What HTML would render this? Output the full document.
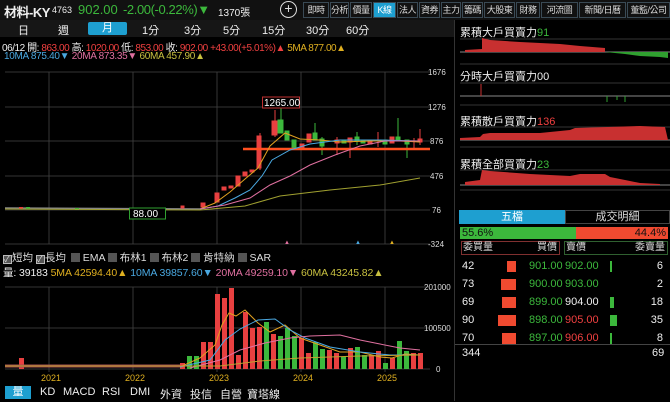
<!DOCTYPE html>
<html><head><meta charset="utf-8"><style>
*{margin:0;padding:0;box-sizing:border-box}
body{width:670px;height:401px;background:#000;color:#ddd;font-family:"Liberation Sans","Noto Sans CJK TC",sans-serif;font-size:11px;position:relative;overflow:hidden}
.a{position:absolute;white-space:nowrap}
.tab{position:absolute;top:2px;height:16px;border:1px solid #3a4a55;background:#111;color:#ddd;font-size:9px;text-align:center;line-height:14px;white-space:nowrap;overflow:hidden;letter-spacing:-0.5px}
.r{color:#f04040}.g{color:#3cb83c}.y{color:#e0b020}.b{color:#4aa8e0}.p{color:#e070a0}.o{color:#c8c040}.w{color:#eee}
</style></head><body>
<div class="a" style="left:0;top:0;width:670px;height:20px;background:#111"></div>
<div class="a" style="left:0;top:20px;width:455px;height:17px;background:#161616"></div>
<div class="a w" style="left:4px;top:2px;font-size:13px;font-weight:bold;letter-spacing:-0.5px">材料-KY</div>
<div class="a w" style="left:52px;top:5px;font-size:9px">4763</div>
<div class="a g" style="left:78px;top:2px;font-size:13px">902.00</div>
<div class="a g" style="left:123px;top:2px;font-size:13px;letter-spacing:-0.4px">-2.00(-0.22%)▼</div>
<div class="a w" style="left:218px;top:4px;font-size:10px">1370張</div>
<div class="a" style="left:280px;top:1px;width:17px;height:17px;border:1.5px solid #ddd;border-radius:50%;color:#ddd;text-align:center;line-height:13px;font-size:14px">+</div>
<div class="tab" style="left:303px;width:26px">即時</div>
<div class="tab" style="left:330px;width:19px">分析</div>
<div class="tab" style="left:350px;width:22px">價量</div>
<div class="tab" style="left:373px;width:23px;background:#1e9fd0;color:#fff">K線</div>
<div class="tab" style="left:397px;width:21px">法人</div>
<div class="tab" style="left:419px;width:21px">資券</div>
<div class="tab" style="left:441px;width:20px">主力</div>
<div class="tab" style="left:462px;width:21px">籌碼</div>
<div class="tab" style="left:484px;width:31px">大股東</div>
<div class="tab" style="left:516px;width:24px">財務</div>
<div class="tab" style="left:541px;width:37px">河流圖</div>
<div class="tab" style="left:579px;width:47px">新聞/日曆</div>
<div class="tab" style="left:627px;width:43px">董監/公司</div>

<div class="a w" style="left:18px;top:22px">日</div>
<div class="a w" style="left:58px;top:22px">週</div>
<div class="a" style="left:88px;top:22px;width:39px;height:13px;background:#1e9fd0;border-radius:2px;color:#fff;text-align:center;line-height:13px">月</div>
<div class="a w" style="left:142px;top:22px">1分</div>
<div class="a w" style="left:184px;top:22px">3分</div>
<div class="a w" style="left:223px;top:22px">5分</div>
<div class="a w" style="left:262px;top:22px">15分</div>
<div class="a w" style="left:306px;top:22px">30分</div>
<div class="a w" style="left:346px;top:22px">60分</div>

<div class="a" style="left:2px;top:39px;font-size:10px;letter-spacing:-0.45px"><span class="w">06/12 開:</span> <span class="r">863.00</span> <span class="w">高:</span> <span class="r">1020.00</span> <span class="w">低:</span> <span class="r">853.00</span> <span class="w">收:</span> <span class="r">902.00</span> <span class="r">+43.00(+5.01%)▲</span> <span class="y">5MA 877.00▲</span></div>
<div class="a" style="left:4px;top:51px;font-size:10px;letter-spacing:-0.3px"><span class="b">10MA 875.40▼</span> <span class="p">20MA 873.35▼</span> <span class="o">60MA 457.90▲</span></div>

<div class="a" style="left:454px;top:20px;width:1px;height:381px;background:#333"></div>

<svg class="a" style="left:0;top:62px" width="455" height="339" viewBox="0 62 455 339">
<g stroke="#444" stroke-width="0.8">
<line x1="5" y1="72" x2="430" y2="72"/><line x1="5" y1="107" x2="430" y2="107"/><line x1="5" y1="141" x2="430" y2="141"/><line x1="5" y1="176" x2="430" y2="176"/><line x1="5" y1="210" x2="430" y2="210"/><line x1="5" y1="244" x2="430" y2="244"/>
<line x1="49" y1="72" x2="49" y2="244"/><line x1="133" y1="72" x2="133" y2="244"/><line x1="217" y1="72" x2="217" y2="244"/><line x1="301" y1="72" x2="301" y2="244"/><line x1="385" y1="72" x2="385" y2="244"/>
<line x1="5" y1="287" x2="430" y2="287"/><line x1="5" y1="328" x2="430" y2="328"/><line x1="5" y1="369" x2="430" y2="369"/>
<line x1="49" y1="287" x2="49" y2="372"/><line x1="133" y1="287" x2="133" y2="372"/><line x1="217" y1="287" x2="217" y2="372"/><line x1="301" y1="287" x2="301" y2="372"/><line x1="385" y1="287" x2="385" y2="372"/>
</g>
<g fill="#ddd" font-size="8" font-family="Liberation Sans">
<text x="428" y="75">1676</text><text x="428" y="110">1276</text><text x="430" y="144">876</text><text x="430" y="179">476</text><text x="432" y="213">76</text><text x="428" y="247">-324</text>
<text x="424" y="290">201000</text><text x="424" y="331">100500</text><text x="436" y="372">0</text>
</g>
<g fill="#e0b020" font-size="9" font-family="Liberation Sans"><text x="41" y="381">2021</text><text x="125" y="381">2022</text><text x="209" y="381">2023</text><text x="293" y="381">2024</text><text x="377" y="381">2025</text></g>
<path d="M5 208 L200 209" stroke="#888" stroke-width="1.5" fill="none"/>
<rect x="19" y="207" width="4" height="2" fill="#e84040"/><rect x="26" y="207" width="4" height="2" fill="#3cb83c"/><rect x="75" y="208" width="4" height="2" fill="#3cb83c"/>
<g fill="#e84040" stroke="#e84040" stroke-width="1">
<rect x="181" y="206" width="3" height="2"/><rect x="201" y="203" width="4" height="4"/><rect x="215" y="193" width="4" height="9"/>
<rect x="222" y="187" width="4" height="3"/><rect x="229" y="186" width="4" height="2"/><rect x="236" y="176" width="4" height="10"/>
<rect x="243" y="172" width="4" height="4"/><rect x="250" y="170" width="4" height="2"/>
<line x1="260" y1="133" x2="260" y2="170"/><rect x="257" y="136" width="4" height="32"/>
<line x1="275" y1="110" x2="275" y2="137"/><rect x="272" y="121" width="5" height="14"/>
<rect x="300" y="144" width="4" height="4"/><rect x="307" y="134" width="4" height="8"/>
<rect x="335" y="140" width="4" height="3"/><line x1="337" y1="137" x2="337" y2="155"/>
<rect x="348" y="138" width="4" height="4"/><line x1="350" y1="140" x2="350" y2="158"/>
<rect x="368" y="141" width="4" height="3"/><line x1="378" y1="132" x2="378" y2="147"/>
<rect x="390" y="137" width="4" height="6"/><line x1="414" y1="138" x2="414" y2="150"/>
<rect x="418" y="139" width="4" height="3"/><line x1="420" y1="129" x2="420" y2="145"/>
</g>
<g fill="#3cb83c" stroke="#3cb83c" stroke-width="1">
<line x1="281" y1="107" x2="281" y2="133"/><rect x="278" y="120" width="5" height="13"/>
<rect x="285" y="131" width="4" height="9"/><rect x="292" y="140" width="4" height="8"/>
<line x1="315" y1="123" x2="315" y2="140"/><rect x="313" y="133" width="4" height="7"/>
<rect x="320" y="139" width="4" height="7"/><line x1="322" y1="137" x2="322" y2="155"/>
<rect x="342" y="140" width="4" height="3"/><rect x="355" y="137" width="4" height="4"/><line x1="357" y1="132" x2="357" y2="145"/>
<rect x="361" y="140" width="4" height="3"/><rect x="383" y="140" width="4" height="4"/>
<rect x="396" y="137" width="4" height="4"/><line x1="398" y1="118" x2="398" y2="141"/>
<rect x="405" y="140" width="4" height="4"/><line x1="407" y1="140" x2="407" y2="158"/>
</g>
<line x1="243" y1="149" x2="430" y2="149" stroke="#ff5020" stroke-width="2.5"/>
<polyline fill="none" stroke="#e0a020" stroke-width="1" points="200,209 215,203 230,192 245,179 258,168 270,146 285,133 300,139 320,140 340,142 370,141 400,141 420,142"/>
<polyline fill="none" stroke="#4aa8e0" stroke-width="1" points="200,209 218,206 235,198 250,190 262,176 272,160 290,150 310,144 340,140 380,140 420,141"/>
<polyline fill="none" stroke="#e070a0" stroke-width="1" points="200,209 225,205 250,198 270,185 290,176 310,165 335,155 360,146 385,141 420,141"/>
<polyline fill="none" stroke="#a0a030" stroke-width="1" points="5,209 200,210 245,206 280,196 330,190 380,185 420,178"/>
<rect x="262.5" y="97" width="37" height="11" fill="#000" stroke="#c03030"/><text x="264" y="106" fill="#fff" font-size="10" font-family="Liberation Sans">1265.00</text>
<rect x="129.5" y="208" width="36" height="11" fill="#000" stroke="#30a030"/><text x="133" y="217" fill="#fff" font-size="10" font-family="Liberation Sans">88.00</text>
<g font-size="6"><text x="284" y="244" fill="#e070a0">▲</text><text x="355" y="244" fill="#4aa8e0">▲</text><text x="389" y="244" fill="#e0b020">▲</text></g>
<g fill="#e84040">
<rect x="19" y="358" width="5" height="11"/><rect x="180" y="363" width="5" height="6"/><rect x="201" y="342" width="5" height="27"/><rect x="208" y="342" width="5" height="27"/>
<rect x="215" y="294" width="5" height="75"/><rect x="222" y="298" width="5" height="71"/><rect x="229" y="288" width="5" height="81"/><rect x="236" y="355" width="5" height="14"/>
<rect x="243" y="312" width="5" height="57"/><rect x="250" y="328" width="5" height="41"/><rect x="257" y="327" width="5" height="42"/>
<rect x="271" y="334" width="5" height="35"/><rect x="299" y="338" width="5" height="31"/><rect x="306" y="353" width="5" height="16"/>
<rect x="327" y="350" width="5" height="19"/><rect x="334" y="353" width="5" height="16"/><rect x="348" y="348" width="5" height="21"/>
<rect x="369" y="355" width="5" height="14"/><rect x="376" y="351" width="5" height="18"/><rect x="390" y="358" width="5" height="11"/>
<rect x="411" y="353" width="5" height="16"/><rect x="418" y="353" width="5" height="16"/>
</g>
<g fill="#3cb83c">
<rect x="187" y="356" width="5" height="13"/><rect x="194" y="356" width="5" height="13"/><rect x="264" y="322" width="5" height="47"/>
<rect x="278" y="336" width="5" height="33"/><rect x="285" y="328" width="5" height="41"/><rect x="292" y="336" width="5" height="33"/>
<rect x="313" y="342" width="5" height="27"/><rect x="320" y="349" width="5" height="20"/><rect x="341" y="357" width="5" height="12"/>
<rect x="355" y="347" width="5" height="22"/><rect x="362" y="355" width="5" height="14"/><rect x="383" y="363" width="5" height="6"/>
<rect x="397" y="341" width="5" height="28"/><rect x="404" y="351" width="5" height="18"/>
</g>
<path d="M5 366 L180 366" stroke="#a05050" stroke-width="3"/>
<polyline fill="none" stroke="#e0a020" stroke-width="1" points="180,367 200,358 215,345 222,325 229,313 236,316 245,310 258,323 270,332 285,325 300,338 320,345 340,352 360,352 380,357 392,358 405,354 420,355"/>
<polyline fill="none" stroke="#4aa8e0" stroke-width="1" points="180,367 210,360 225,340 240,329 258,320 275,319 290,330 305,338 330,347 360,352 390,355 420,355"/>
<polyline fill="none" stroke="#e070a0" stroke-width="1" points="190,368 220,360 240,350 265,343 290,338 310,336 340,335 360,340 380,344 400,348 420,350"/>
<polyline fill="none" stroke="#c0a030" stroke-width="1" points="5,366 220,366 260,361 300,358 360,356 420,355"/>
</svg>

<div class="a" style="left:3px;top:250px;font-size:10.5px;color:#ddd">
<span style="display:inline-block;width:9px;height:9px;border:1px solid #bbb;background:#555;font-size:8px;line-height:7px;vertical-align:-1px">✓</span>短均
<span style="display:inline-block;width:9px;height:9px;border:1px solid #bbb;background:#555;font-size:8px;line-height:7px;vertical-align:-1px">✓</span>長均
<span style="display:inline-block;width:9px;height:9px;background:#555;vertical-align:-1px;margin-left:2px"></span> EMA
<span style="display:inline-block;width:9px;height:9px;background:#555;vertical-align:-1px"></span> 布林1
<span style="display:inline-block;width:9px;height:9px;background:#555;vertical-align:-1px"></span> 布林2
<span style="display:inline-block;width:9px;height:9px;background:#555;vertical-align:-1px"></span> 肯特納
<span style="display:inline-block;width:9px;height:9px;background:#555;vertical-align:-1px"></span> SAR</div>
<div class="a" style="left:3px;top:265px;font-size:10.5px;letter-spacing:-0.1px"><span class="w">量: 39183</span> <span class="y">5MA 42594.40▲</span> <span class="b">10MA 39857.60▼</span> <span class="p">20MA 49259.10▼</span> <span class="o">60MA 43245.82▲</span></div>

<div class="a" style="left:5px;top:386px;width:26px;height:13px;background:#1e9fd0;color:#fff;text-align:center;line-height:13px">量</div>
<div class="a w" style="left:40px;top:386px">KD</div>
<div class="a w" style="left:63px;top:386px">MACD</div>
<div class="a w" style="left:102px;top:386px">RSI</div>
<div class="a w" style="left:130px;top:386px">DMI</div>
<div class="a w" style="left:160px;top:386px">外資</div>
<div class="a w" style="left:190px;top:386px">投信</div>
<div class="a w" style="left:220px;top:386px">自營</div>
<div class="a w" style="left:247px;top:386px">寶塔線</div>

<svg class="a" style="left:455px;top:20px" width="215" height="185" viewBox="455 20 215 185">
<g stroke="#333" stroke-width="1"><line x1="460" y1="39" x2="670" y2="39"/><line x1="460" y1="64" x2="670" y2="64"/><line x1="460" y1="83" x2="670" y2="83"/><line x1="460" y1="105" x2="670" y2="105"/><line x1="460" y1="127" x2="670" y2="127"/><line x1="460" y1="147" x2="670" y2="147"/><line x1="460" y1="170" x2="670" y2="170"/><line x1="460" y1="190" x2="670" y2="190"/></g>
<g stroke="#888" stroke-width="1"><line x1="460" y1="52" x2="670" y2="52"/><line x1="460" y1="96" x2="670" y2="96"/><line x1="460" y1="140" x2="670" y2="140"/><line x1="460" y1="185" x2="670" y2="185"/></g>
<polygon fill="#c83030" points="465,52 465,50 482,49 482,38 490,40 520,42 560,44 580,46 605,48 605,52"/>
<polygon fill="#30a030" points="605,52 605,52 625,54 640,56 660,57 668,58 668,52"/>
<line x1="481" y1="84" x2="481" y2="96" stroke="#c83030"/><line x1="607" y1="96" x2="607" y2="102" stroke="#30a030"/><line x1="617" y1="96" x2="617" y2="100" stroke="#30a030"/><line x1="625" y1="96" x2="625" y2="102" stroke="#30a030"/>
<polygon fill="#c83030" points="460,140 460,138 480,137 483,134 490,133 540,133 570,130 575,128 640,126 665,127 668,140"/>
<polygon fill="#c83030" points="465,185 465,182 480,180 482,170 490,171 530,174 570,176 580,174 605,174 610,177 625,180 640,183 660,184 660,185"/>
</svg>
<div class="a w" style="left:460px;top:24px">累積大戶買賣力<span class="g">91</span></div>
<div class="a w" style="left:460px;top:68px">分時大戶買賣力00</div>
<div class="a w" style="left:460px;top:113px">累積散戶買賣力<span class="r">136</span></div>
<div class="a w" style="left:460px;top:156px">累積全部買賣力<span class="g">23</span></div>

<div class="a" style="left:459px;top:210px;width:106px;height:14px;background:#1e9fd0;color:#fff;text-align:center;line-height:14px">五檔</div>
<div class="a" style="left:565px;top:210px;width:105px;height:14px;border:1px solid #444;color:#ddd;text-align:center;line-height:12px">成交明細</div>
<div class="a" style="left:460px;top:227px;width:116px;height:12px;background:#3cb83c;color:#111;line-height:12px;padding-left:2px">55.6%</div>
<div class="a" style="left:576px;top:227px;width:92px;height:12px;background:#f04a30;color:#111;line-height:12px;text-align:right;padding-right:2px">44.4%</div>
<div class="a" style="left:461px;top:241px;width:99px;height:14px;border:1px solid #803030;color:#ddd;line-height:12px;font-size:10px"><span style="position:absolute;left:1px">委買量</span><span style="position:absolute;right:2px">買價</span></div>
<div class="a" style="left:564px;top:241px;width:104px;height:14px;border:1px solid #306030;color:#ddd;line-height:12px;font-size:10px"><span style="position:absolute;left:1px">賣價</span><span style="position:absolute;right:2px">委賣量</span></div>
<div class="a" style="left:455px;top:257px;width:215px;font-size:11px;line-height:18px">
<div style="position:relative;height:18px"><span class="a w" style="left:7px">42</span><span class="a" style="left:52px;top:4px;width:9px;height:11px;background:#f04a30"></span><span class="a g" style="left:74px">901.00</span><span class="a g" style="left:110px">902.00</span><span class="a" style="left:155px;top:4px;width:2px;height:11px;background:#3cb83c"></span><span class="a w" style="right:7px">6</span></div>
<div style="position:relative;height:18px"><span class="a w" style="left:7px">73</span><span class="a" style="left:46px;top:4px;width:15px;height:11px;background:#f04a30"></span><span class="a g" style="left:74px">900.00</span><span class="a g" style="left:110px">903.00</span><span class="a w" style="right:7px">2</span></div>
<div style="position:relative;height:18px"><span class="a w" style="left:7px">69</span><span class="a" style="left:47px;top:4px;width:14px;height:11px;background:#f04a30"></span><span class="a g" style="left:74px">899.00</span><span class="a w" style="left:110px">904.00</span><span class="a" style="left:155px;top:4px;width:4px;height:11px;background:#3cb83c"></span><span class="a w" style="right:7px">18</span></div>
<div style="position:relative;height:18px"><span class="a w" style="left:7px">90</span><span class="a" style="left:43px;top:4px;width:18px;height:11px;background:#f04a30"></span><span class="a g" style="left:74px">898.00</span><span class="a r" style="left:110px">905.00</span><span class="a" style="left:155px;top:4px;width:7px;height:11px;background:#3cb83c"></span><span class="a w" style="right:7px">35</span></div>
<div style="position:relative;height:18px"><span class="a w" style="left:7px">70</span><span class="a" style="left:47px;top:4px;width:14px;height:11px;background:#f04a30"></span><span class="a g" style="left:74px">897.00</span><span class="a r" style="left:110px">906.00</span><span class="a" style="left:155px;top:4px;width:2px;height:11px;background:#3cb83c"></span><span class="a w" style="right:7px">8</span></div>
</div>
<div class="a" style="left:455px;top:344px;width:215px;height:1px;background:#444"></div>
<div class="a w" style="left:462px;top:347px">344</div>
<div class="a w" style="left:652px;top:347px">69</div>
</body></html>
